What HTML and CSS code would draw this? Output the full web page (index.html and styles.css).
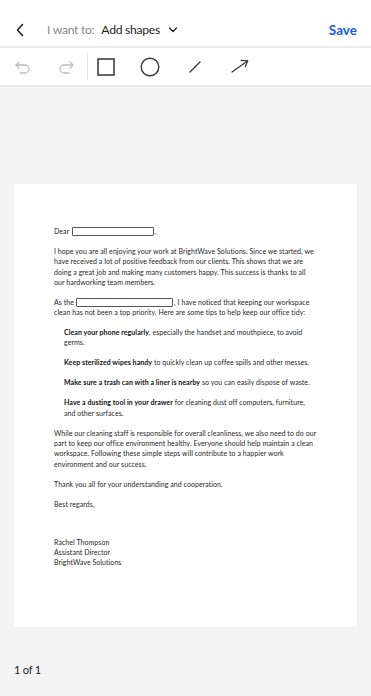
FILE: index.html
```html
<!DOCTYPE html>
<html>
<head>
<meta charset="utf-8">
<link rel="stylesheet" href="styles.css">
</head>
<body>
<div class="app">
  <header class="header">
    <svg class="back" width="10" height="14" viewBox="0 0 10 14"><path d="M7.5 1.5 L2.5 7 L7.5 12.5" fill="none" stroke="#222" stroke-width="1.6" stroke-linecap="round" stroke-linejoin="round"/></svg>
    <span class="label">I want to:</span>
    <span class="mode">Add shapes</span>
    <svg class="chev" width="10" height="8" viewBox="0 0 10 8"><path d="M1.5 2 L5 5.5 L8.5 2" fill="none" stroke="#222" stroke-width="1.4" stroke-linecap="round" stroke-linejoin="round"/></svg>
    <span class="save">Save</span>
  </header>
  <div class="toolbar">
    <svg class="tool undo" width="18" height="18" viewBox="0 0 18 18"><path d="M5 4 L2 7 L5 10" fill="none" stroke="#bdbdbd" stroke-width="1.3" stroke-linecap="round" stroke-linejoin="round"/><path d="M2.5 7 H11 a4 4 0 0 1 0 8 H6" fill="none" stroke="#bdbdbd" stroke-width="1.3" stroke-linecap="round"/></svg>
    <svg class="tool redo" width="18" height="18" viewBox="0 0 18 18"><path d="M13 4 L16 7 L13 10" fill="none" stroke="#bdbdbd" stroke-width="1.3" stroke-linecap="round" stroke-linejoin="round"/><path d="M15.5 7 H7 a4 4 0 0 0 0 8 H12" fill="none" stroke="#bdbdbd" stroke-width="1.3" stroke-linecap="round"/></svg>
    <span class="divider"></span>
    <svg class="tool rect" width="18" height="18" viewBox="0 0 18 18"><rect x="1" y="1" width="16" height="16" fill="none" stroke="#333" stroke-width="1.5"/></svg>
    <svg class="tool circ" width="20" height="20" viewBox="0 0 20 20"><circle cx="10" cy="10" r="8.8" fill="none" stroke="#333" stroke-width="1.4"/></svg>
    <svg class="tool line" width="12" height="12" viewBox="0 0 12 12"><path d="M1 11 L11 1" fill="none" stroke="#333" stroke-width="1.3" stroke-linecap="round"/></svg>
    <svg class="tool arrow" width="18" height="14" viewBox="0 0 18 14"><path d="M1 13 L16.5 2" fill="none" stroke="#333" stroke-width="1.2" stroke-linecap="round"/><path d="M10 1.3 L16.8 1.8 L14.2 7.8" fill="none" stroke="#333" stroke-width="1.2" stroke-linecap="round" stroke-linejoin="round"/></svg>
  </div>
  <main class="canvas">
    <div class="page">
      <p>Dear <span class="field field-name"></span>,</p>
      <p>I hope you are all enjoying your work at BrightWave Solutions. Since we started, we have received a lot of positive feedback from our clients. This shows that we are doing a great job and making many customers happy. This success is thanks to all our hardworking team members.</p>
      <p>As the<span class="field field-role"></span>, I have noticed that keeping our workspace clean has not been a top priority. Here are some tips to help keep our office tidy:</p>
      <p class="tip"><b>Clean your phone regularly</b>, especially the handset and mouthpiece, to avoid germs.</p>
      <p class="tip"><b>Keep sterilized wipes handy</b> to quickly clean up coffee spills and other messes.</p>
      <p class="tip"><b>Make sure a trash can with a liner is nearby</b> so you can easily dispose of waste.</p>
      <p class="tip"><b>Have a dusting tool in your drawer</b> for cleaning dust off computers, furniture, and other surfaces.</p>
      <p>While our cleaning staff is responsible for overall cleanliness, we also need to do our part to keep our office environment healthy. Everyone should help maintain a clean workspace. Following these simple steps will contribute to a happier work environment and our success.</p>
      <p>Thank you all for your understanding and cooperation.</p>
      <p class="closing">Best regards,</p>
      <p>Rachel Thompson<br>Assistant Director<br>BrightWave Solutions</p>
    </div>
    <div class="pager">1 of 1</div>
  </main>
</div>
</body>
</html>
```
FILE: styles.css
```css
* { box-sizing: border-box; }
html, body { margin: 0; padding: 0; }
body {
  width: 371px;
  height: 696px;
  overflow: hidden;
  font-family: "Lato", "Open Sans", sans-serif;
  background: #f3f3f3;
}
.app {
  display: flex;
  flex-direction: column;
  height: 696px;
}
.header {
  height: 48px;
  background: #fff;
  border-bottom: 2px solid #ececec;
  display: flex;
  align-items: center;
  padding: 13px 14px 0 14px;
}
.back { margin-left: 1px; margin-right: 22px; }
.label {
  font-size: 12.2px;
  letter-spacing: -0.3px;
  color: #8a8a8a;
  margin-right: 7px;
}
.mode {
  font-size: 12.2px;
  letter-spacing: -0.3px;
  color: #1e1e1e;
}
.chev { margin-left: 8px; margin-top: 1px; }
.save {
  margin-left: auto;
  font-size: 13.5px;
  font-weight: 700;
  color: #1a5cf0;
}
.toolbar {
  height: 39px;
  background: #fff;
  border-bottom: 2px solid #ececec;
  display: flex;
  align-items: center;
  padding-left: 14px;
}
.tool { display: block; flex: none; }
.undo { margin-right: 25px; }
.redo { margin-right: 12px; }
.divider {
  width: 1px;
  height: 27px;
  background: #e4e4e4;
  margin-right: 9px;
}
.rect { margin-right: 25px; }
.circ { margin-right: 29px; }
.line { margin-right: 30px; margin-top: 1px; }
.arrow { margin-top: -1px; }
.canvas {
  flex: 1;
  padding: 97px 14px 0 14px;
  display: flex;
  flex-direction: column;
}
.page {
  width: 343px;
  height: 443px;
  background: #fff;
  padding: 42px 40px 0 40px;
  font-size: 7px;
  line-height: 10.3px;
  letter-spacing: 0.06px;
  color: #262626;
}
.page p { margin: 0 0 9.7px 0; }
.page b { font-weight: 700; color: #111; }
.page .tip { padding-left: 10px; }
.page .closing { margin-bottom: 28px; }
.field {
  display: inline-block;
  vertical-align: -2px;
  border: 1px solid #555;
  border-radius: 1px;
  height: 9px;
}
.field-name { width: 82px; margin: 0 1px 0 1px; }
.field-role { width: 97px; margin: 0 1px 0 2px; }
.pager {
  margin-top: 36px;
  font-size: 11px;
  letter-spacing: -0.2px;
  color: #222;
}
```
